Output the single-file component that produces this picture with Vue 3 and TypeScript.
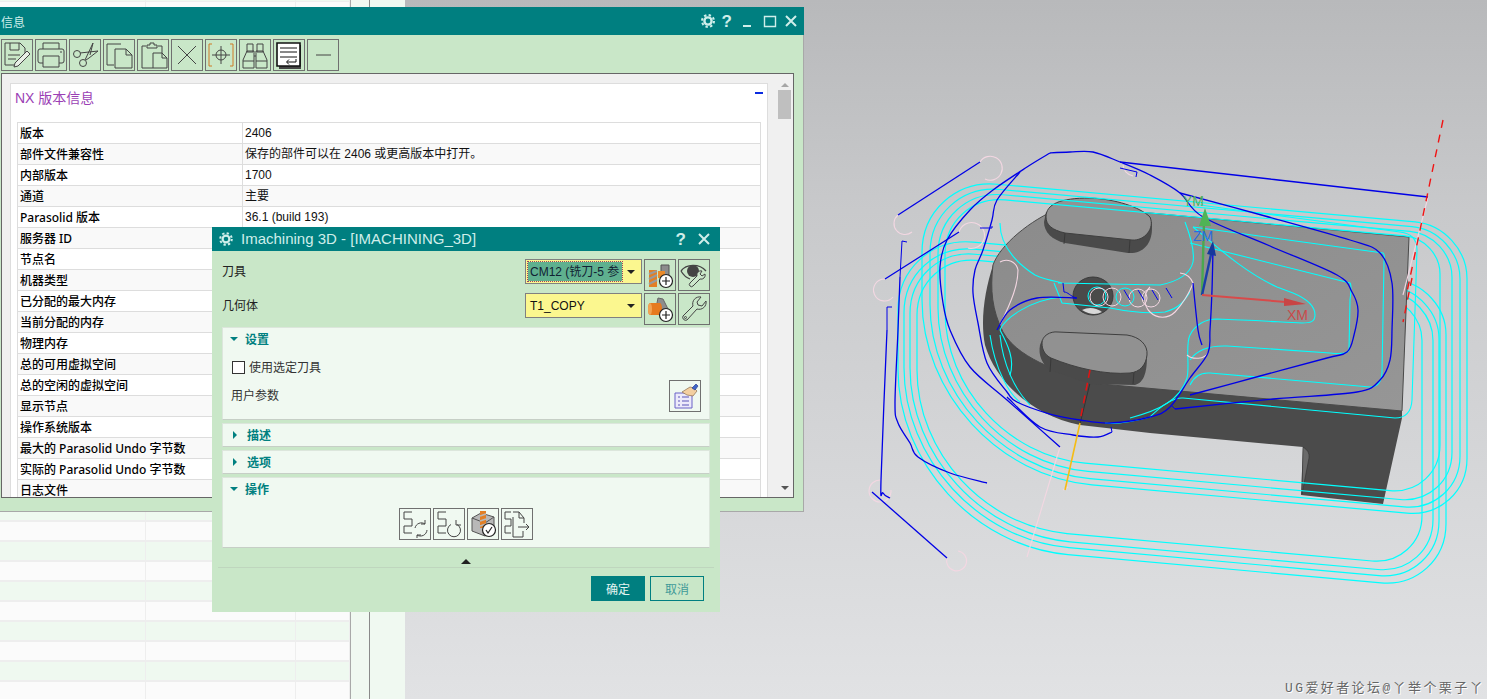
<script setup lang="ts">
type Loop = { back: number; front: number; left: number; right: number; rs: number[] }

const sheetRows = Array.from({ length: 36 }, (_, i) => i)

const infoRows: [string, string][] = [
  ['版本', '2406'],
  ['部件文件兼容性', '保存的部件可以在 2406 或更高版本中打开。'],
  ['内部版本', '1700'],
  ['通道', '主要'],
  ['Parasolid 版本', '36.1 (build 193)'],
  ['服务器 ID', ''],
  ['节点名', ''],
  ['机器类型', ''],
  ['已分配的最大内存', ''],
  ['当前分配的内存', ''],
  ['物理内存', ''],
  ['总的可用虚拟空间', ''],
  ['总的空闲的虚拟空间', ''],
  ['显示节点', ''],
  ['操作系统版本', ''],
  ['最大的 Parasolid Undo 字节数', ''],
  ['实际的 Parasolid Undo 字节数', ''],
  ['日志文件', ''],
]

// toolpath loop: rounded quad, back/front are y at x=1150, lines fall 0.09 per px
const SLOPE = 0.09
function loopPath(l: Loop): string {
  const by = (x: number) => l.back + (x - 1150) * SLOPE
  const fy = (x: number) => l.front + (x - 1150) * SLOPE
  const [bl, br, fr, fl] = l.rs
  const k = 0.45
  const p = [
    `M${l.left + bl} ${by(l.left + bl)}`,
    `L${l.right - br} ${by(l.right - br)}`,
    `C${l.right - br * k} ${by(l.right - br * k)} ${l.right} ${by(l.right) + br * k} ${l.right} ${by(l.right) + br}`,
    `L${l.right} ${fy(l.right) - fr}`,
    `C${l.right} ${fy(l.right) - fr * k} ${l.right - fr * k} ${fy(l.right - fr * k)} ${l.right - fr} ${fy(l.right - fr)}`,
    `L${l.left + fl} ${fy(l.left + fl)}`,
    `C${l.left + fl * k} ${fy(l.left + fl * k)} ${l.left} ${fy(l.left) - fl * k} ${l.left} ${fy(l.left) - fl}`,
    `L${l.left} ${by(l.left) + bl}`,
    `C${l.left} ${by(l.left) + bl * k} ${l.left + bl * k} ${by(l.left + bl * k)} ${l.left + bl} ${by(l.left + bl)}`,
    'Z',
  ]
  return p.join(' ')
}

// catmull-rom through "x y x y ..." points
function smooth(src: string): string {
  const n = src.trim().split(/\s+/).map(Number)
  const pts: number[][] = []
  for (let i = 0; i < n.length; i += 2) pts.push([n[i], n[i + 1]])
  let d = `M${pts[0][0]} ${pts[0][1]}`
  for (let i = 0; i < pts.length - 1; i++) {
    const a = pts[Math.max(i - 1, 0)]
    const b = pts[i]
    const c = pts[i + 1]
    const e = pts[Math.min(i + 2, pts.length - 1)]
    const c1 = [b[0] + (c[0] - a[0]) / 6, b[1] + (c[1] - a[1]) / 6]
    const c2 = [c[0] - (e[0] - b[0]) / 6, c[1] - (e[1] - b[1]) / 6]
    d += ` C${c1[0].toFixed(1)} ${c1[1].toFixed(1)} ${c2[0].toFixed(1)} ${c2[1].toFixed(1)} ${c[0]} ${c[1]}`
  }
  return d
}

const lowerLoops: Loop[] = [
  { back: 276, front: 541, left: 917, right: 1422, rs: [60, 40, 50, 150] },
  { back: 270, front: 549, left: 910, right: 1433, rs: [65, 45, 55, 160] },
  { back: 265, front: 555, left: 904, right: 1439, rs: [70, 48, 60, 165] },
  { back: 258, front: 562, left: 898, right: 1446, rs: [75, 50, 65, 170] },
].map(loopPath)

const upperLoops: Loop[] = [
  { back: 213, front: 469, left: 945, right: 1440, rs: [60, 35, 50, 140] },
  { back: 208, front: 477, left: 938, right: 1452, rs: [65, 42, 52, 150] },
  { back: 203, front: 484, left: 930, right: 1460, rs: [70, 48, 56, 160] },
  { back: 198, front: 490, left: 922, right: 1467, rs: [75, 52, 60, 170] },
].map(loopPath)

const cyanPaths = [
  'M1193 227L1383 253Q1385 254 1384 262L1382 373Q1381 387 1370 387L1210 373Q1196 372 1190 385',
  'M1190 243L1350 283Q1352 285 1350 300L1349 350Q1347 355 1330 353L1227 346Q1200 345 1190 360',
  'M1200 205L1400 232Q1417 234 1417 250L1412 400Q1411 418 1395 418L1183 398Q1170 397 1150 417Q1120 425 1105 423',
  'M1193 227C1210 240 1240 270 1277 287L1293 293C1305 298 1315 305 1315 315C1315 322 1310 323 1302 323C1280 322 1250 320 1217 319C1205 319 1195 325 1190 335C1185 345 1190 365 1187 378C1180 400 1160 410 1130 418',
  'M1000 223C1000 245 1015 262 1035 275C1050 282 1070 283 1058 283L1160 285C1175 282 1190 275 1193 262C1195 250 1190 235 1185 222',
  'M1054 283L1062 303L1110 308C1130 312 1150 314 1165 312C1180 308 1185 300 1190 292',
  'M1000 330C1005 318 1030 300 1062 297',
  'M990 335C995 370 1010 395 1020 402',
  'M1000 335C1003 365 1015 390 1030 405',
  'M1000 330C1008 345 1015 360 1010 375',
]

const bluePaths = [
  '1120 162 1428 197',
  '1050 153 1070 152 1093 152 1120 162 1150 175 1180 193 1203 217 1270 246 1337 275 1352 292 1358 310 1354 335 1347 352 1327 358 1260 376 1190 395',
  '1180 193 1265 216 1350 240 1380 253 1392 283 1392 330 1390 360 1380 380 1357 392 1273 399 1175 409',
  '1050 153 1027 167 993 190 970 210 947 240 940 267 943 303 950 330 970 367 1007 400 1060 447',
  '1020 172 997 200 992 220 983 250 975 270 973 293 978 323 987 363 1007 392 1017 402 1050 414 1080 420 1110 423 1150 417 1170 407 1190 378 1208 353 1210 330 1212 290 1213 250',
  '997 330 1010 310 1037 298 1077 298',
  '1193 283 1198 330 1202 345',
  '900 277 898 330 895 403 898 423 910 443 918 457 950 473 987 483',
  '887 330 881 480 883 493 890 498',
  '898 215 980 162',
  '885 279 959 232',
  '872 492 947 558',
  '1007 397 1040 427 1073 435 1098 437 1112 432',
].map(smooth)

const blueTicks = [
  'M892 307L887 307L887 330',
  'M900 277L902 241L907 242',
  'M980 228L992 228L992 226',
  'M1076 298C1070 296 1068 292 1064 292L1063 283',
  'M1120 168L1137 172L1136 177',
  'M1112 432L1111 427',
  'M1175 409L1172 406',
]

const pinkPaths = [
  'M980 162A12 12 0 1 1 985 179',
  'M898 215A11 11 0 1 0 912 232',
  'M959 232A13 13 0 1 1 968 248',
  'M885 279A11 11 0 1 0 893 297',
  'M881 480A11 11 0 1 0 891 490',
  'M947 558A10 10 0 1 0 958 551',
  'M1123 165A12 12 0 0 0 1133 176',
  'M1000 262A12 12 0 0 1 1018 270C1018 285 1012 300 1000 325',
  'M1060 447L1027 557',
  'M1428 197L1403 295',
  'M1063 490L1068 487',
  'M1150 287A14 14 0 0 0 1175 312C1182 305 1190 292 1193 283A16 16 0 0 0 1180 273',
  'M1187 355A12 8 0 0 0 1208 353',
]

const helix = [
  { cx: 1097, cy: 296, c: '#00ffff' },
  { cx: 1099, cy: 297, c: '#f3d7e2' },
  { cx: 1112, cy: 297, c: '#f3d7e2' },
  { cx: 1125, cy: 297, c: '#00ffff' },
  { cx: 1138, cy: 298, c: '#f3d7e2' },
  { cx: 1151, cy: 298, c: '#f3d7e2' },
]
</script>

<template>
  <div class="page">
    <!-- spreadsheet behind the windows -->
    <div class="sheet">
      <div class="sheet-grid">
        <div v-for="r in sheetRows" :key="r" class="sheet-row">
          <span class="cell c1" />
          <span class="cell c2" />
          <span class="cell c3">{{ r === 1 ? '数量 kW' : '' }}</span>
        </div>
      </div>
      <div class="side-a" />
      <div class="side-b" />
    </div>

    <!-- 3D view -->
    <div class="viewport">
      <svg class="scene" width="1082" height="699" viewBox="405 0 1082 699" fill="none">
        <defs>
          <linearGradient id="faceGrad" x1="0" y1="0" x2="1" y2="1">
            <stop offset="0" stop-color="#8b8b8b" />
            <stop offset="1" stop-color="#969696" />
          </linearGradient>
        </defs>

        <g stroke="#00ffff" stroke-width="1.2">
          <path v-for="(d, i) in lowerLoops" :key="i" :d="d" />
        </g>

        <!-- part -->
        <path d="M993 265C985 290 980 320 985 345C995 380 1030 415 1080 425L1150 433L1303 447L1301 495L1383 504L1402 418L1402 411L1090 300Z" fill="#4b4b4b" />
        <path d="M1303 447Q1310 451 1309 458L1302 494Z" fill="#6a6a6a" stroke="#333" stroke-width="0.6" />
        <path d="M1409 237L1150 213L1060 208C1030 220 1000 245 993 265C990 290 992 310 1003 332C1012 348 1030 358 1045 365L1090 383L1402 411Z" fill="url(#faceGrad)" stroke="#4a4a4a" stroke-width="1" />
        <path d="M1090 383L1080 424" stroke="#333" stroke-width="1" />

        <!-- upper boss -->
        <path d="M1044 222C1044 232 1052 240 1065 243L1128 253C1142 254 1152 245 1152 228L1152 222L1046 212Z" fill="#4a4a4a" />
        <path d="M1065 233L1064 244M1130 240L1129 253" stroke="#333" stroke-width="0.8" />
        <path d="M1046 217C1046 204 1060 198 1090 198C1115 199 1140 207 1150 217C1155 228 1145 241 1132 240L1065 233C1052 230 1046 225 1046 217Z" fill="#929292" stroke="#3f3f3f" stroke-width="1" />

        <!-- lower boss -->
        <path d="M1040 345C1038 355 1042 364 1050 370L1090 384L1135 385C1145 382 1147 370 1147 355L1042 340Z" fill="#4a4a4a" />
        <path d="M1051 358L1050 372M1134 372L1133 384" stroke="#333" stroke-width="0.8" />
        <path d="M1042 343C1042 336 1050 331 1058 332L1127 335C1140 337 1148 345 1147 355C1146 365 1140 372 1130 373C1105 375 1075 368 1051 358C1045 355 1042 350 1042 343Z" fill="#919191" stroke="#3f3f3f" stroke-width="1" />

        <!-- hole -->
        <ellipse cx="1093" cy="296" rx="20" ry="19" fill="#4a4a4a" stroke="#3a3a3a" />
        <path d="M1082 310Q1092 305 1102 312Q1093 317 1082 310Z" fill="#d8d8d8" />

        <g stroke="#00ffff" stroke-width="1.2">
          <path v-for="(d, i) in upperLoops" :key="i" :d="d" />
        </g>
        <g stroke="#00ffff" stroke-width="1.1">
          <path v-for="(d, i) in cyanPaths" :key="i" :d="d" />
        </g>

        <circle v-for="(h, i) in helix" :key="i" :cx="h.cx" :cy="h.cy" r="9" :stroke="h.c" stroke-width="1" />
        <path d="M1124 290L1130 300M1138 290L1144 300M1152 290L1158 300M1166 288L1172 298" stroke="#0000ee" stroke-width="1" />

        <g stroke="#f3d7e2" stroke-width="1.1">
          <path v-for="(d, i) in pinkPaths" :key="i" :d="d" />
        </g>
        <g stroke="#0000e6" stroke-width="1.3">
          <path v-for="(d, i) in bluePaths" :key="i" :d="d" />
          <path v-for="(d, i) in blueTicks" :key="'t' + i" :d="d" stroke-width="1" />
        </g>

        <!-- tool axis -->
        <path d="M1443 120L1407 292" stroke="#f01414" stroke-width="1.4" stroke-dasharray="8 7" />
        <path d="M1412 278L1403 322" stroke="#f01414" stroke-width="1.4" stroke-dasharray="8 6" />
        <path d="M1090 370L1080 421" stroke="#e01414" stroke-width="1.6" stroke-dasharray="8 5" />
        <path d="M1080 423L1065 490" stroke="#f5bc14" stroke-width="1.6" />

        <!-- MCS -->
        <path d="M1202 295L1204 222" stroke="#4aa84f" stroke-width="2.4" />
        <path d="M1205 208L1199 226L1211 226Z" fill="#4fb355" />
        <path d="M1202 295L1212 250" stroke="#1a3fa8" stroke-width="2.4" />
        <path d="M1213 241L1207 254L1216 256Z" fill="#15389c" />
        <path d="M1202 295L1286 302" stroke="#d84a4a" stroke-width="2" />
        <path d="M1306 304L1284 298L1284 306Z" fill="#c84545" />
        <text x="1183" y="206" class="axis" fill="#4fae5a">YM</text>
        <text x="1193" y="241" class="axis" fill="#2a6ae0">ZM</text>
        <text x="1287" y="320" class="axis" fill="#c94a4a">XM</text>
      </svg>
      <div class="mark">UG爱好者论坛@丫举个栗子丫</div>
    </div>

    <!-- information window -->
    <section class="info">
      <header class="bar">
        <span class="info-title">信息</span>
        <span class="bar-icons">
          <svg class="gear" width="16" height="16" viewBox="0 0 16 16" fill="none" stroke="#cfeeea">
            <circle cx="8" cy="8" r="3.6" stroke-width="2.4" />
            <circle cx="8" cy="8" r="6" stroke-width="2" stroke-dasharray="2.4 2.3" />
          </svg>
          <span class="q">?</span>
          <svg width="14" height="14" viewBox="0 0 14 14" fill="none" stroke="#cfeeea" stroke-width="2"><path d="M1 12h8" /></svg>
          <svg width="14" height="14" viewBox="0 0 14 14" fill="none" stroke="#cfeeea" stroke-width="1.4"><path d="M1.5 2.5h11v10h-11z" /></svg>
          <svg width="14" height="14" viewBox="0 0 14 14" fill="none" stroke="#cfeeea" stroke-width="2"><path d="M2 2l10 10M12 2L2 12" /></svg>
        </span>
      </header>
      <div class="toolbar">
        <button class="ib">
          <svg viewBox="0 0 30 30">
            <path d="M3 3h15l5 5v5M3 3v22h9M8 3v7h9V3M6 15h12M6 19h8" />
            <path d="M25 11l3 3-12 12-4 1 1-4z" fill="#e8efe6" />
          </svg>
        </button>
        <button class="ib">
          <svg viewBox="0 0 30 30">
            <path d="M7 9V3h16v6M7 23H4a2 2 0 0 1-2-2V11a2 2 0 0 1 2-2h22a2 2 0 0 1 2 2v10a2 2 0 0 1-2 2h-3M7 16h16v11H7zM24 12h2" />
          </svg>
        </button>
        <button class="ib">
          <svg viewBox="0 0 30 30">
            <circle cx="7" cy="14" r="3.5" />
            <circle cx="13" cy="23" r="3.5" />
            <path d="M10 13l18-2-9 7-3 2M15 20L23 3l-3 12" />
          </svg>
        </button>
        <button class="ib">
          <svg viewBox="0 0 30 30">
            <path d="M17 4H3v21h7" />
            <path d="M11 9h11l6 6v13H11zM22 9v6h6" />
          </svg>
        </button>
        <button class="ib">
          <svg viewBox="0 0 30 30">
            <path d="M8 6H4v22h11M20 6h4v7" />
            <path d="M9 7V5h3V3h4v2h3v3H9zM15 13h9l5 5v10H15zM24 13v5h5" />
          </svg>
        </button>
        <button class="ib">
          <svg viewBox="0 0 30 30"><path d="M6 6l18 18M24 6L6 24" /></svg>
        </button>
        <button class="ib">
          <svg viewBox="0 0 30 30">
            <path d="M6 4H3v22h3M24 4h3v22h-3" stroke="#cf7a24" />
            <circle cx="15" cy="15" r="5" />
            <path d="M15 6v18M6 15h18" />
          </svg>
        </button>
        <button class="ib">
          <svg viewBox="0 0 30 30">
            <path d="M7 4h6v8H7zM17 4h6v8h-6zM7 11h7v17H3v-8zM16 11h7l4 9v8H16zM14 16h2M3 21h11M16 21h11" />
          </svg>
        </button>
        <button class="ib">
          <svg viewBox="0 0 30 30">
            <path d="M5 5h22v24H5z" fill="#444" stroke="none" />
            <path d="M3 3h23v23H3z" fill="#fff" stroke="#111" stroke-width="1.6" />
            <path d="M6 8h17M6 12h17M6 17h17M22 19v3h-9M15 19.5L12.5 22l2.5 2.5" stroke="#111" />
          </svg>
        </button>
        <button class="ib">
          <svg viewBox="0 0 30 30"><path d="M8 15h15" /></svg>
        </button>
      </div>

      <div class="box">
        <div class="panel">
          <div class="panel-head">
            <h2>NX 版本信息</h2>
            <i class="collapse" />
          </div>
          <div class="info-table">
            <div v-for="(row, i) in infoRows" :key="i" class="info-row">
              <span class="k">{{ row[0] }}</span>
              <span class="v">{{ row[1] }}</span>
            </div>
          </div>
        </div>
        <div class="scroll">
          <i class="arr up" />
          <i class="thumb" />
          <i class="arr down" />
        </div>
      </div>
    </section>

    <!-- operation dialog -->
    <section class="dialog">
      <header class="dlg-bar">
        <svg width="16" height="16" viewBox="0 0 16 16" fill="none" stroke="#cfeeea">
          <circle cx="8" cy="8" r="3.4" stroke-width="2.2" />
          <circle cx="8" cy="8" r="5.8" stroke-width="2" stroke-dasharray="2.3 2.25" />
        </svg>
        <span class="dlg-title">Imachining 3D - [IMACHINING_3D]</span>
        <span class="q dlg-q">?</span>
        <svg width="14" height="14" viewBox="0 0 14 14" fill="none" stroke="#cfeeea" stroke-width="2"><path d="M2 2l10 10M12 2L2 12" /></svg>
      </header>

      <div class="dlg-body">
        <div class="pick">
          <label>刀具</label>
          <div class="combo">
            <span class="sel">CM12 (铣刀-5 参</span>
            <i class="tri" />
          </div>
          <button class="ib">
            <svg viewBox="0 0 30 30">
              <path d="M16 5h8v14h-8z" fill="#8c8c8c" stroke="#555" />
              <path d="M4 10h8v17H4z" fill="#e27f25" stroke="none" />
              <path d="M4 14l8-3M4 19l8-4M4 24l8-4" stroke="#9a9a9a" stroke-width="2" />
              <path d="M13 11h7v7h-7z" fill="#ea8a2a" stroke="none" />
              <circle cx="21" cy="21" r="6.5" fill="#fff" stroke="#222" stroke-width="1.2" />
              <path d="M21 17v8M17 21h8" stroke="#222" stroke-width="1.2" />
            </svg>
          </button>
          <button class="ib">
            <svg viewBox="0 0 30 30">
              <path d="M2 11C7 4 20 3 27 11" stroke-width="1.3" />
              <path d="M2 11C5 16 8 18 11 19" stroke-width="1.3" />
              <circle cx="14" cy="11" r="6" fill="#444" stroke="none" />
              <path d="M26 14a4 4 0 0 1-5 5l-7 7a2 2 0 0 1-3-3l7-7a4 4 0 0 1 5-5l-2 3 2 2z" fill="#cde8cc" stroke="#444" />
            </svg>
          </button>
        </div>
        <div class="pick">
          <label>几何体</label>
          <div class="combo">
            <span class="plain">T1_COPY</span>
            <i class="tri" />
          </div>
          <button class="ib">
            <svg viewBox="0 0 30 30">
              <path d="M13 4l5 1 7 14-7 3-6-13z" fill="#8d8d8d" stroke="#666" />
              <path d="M5 9h10a2 6 0 0 1 0 12H5a2 6 0 0 1 0-12z" fill="#e67a1f" stroke="none" />
              <ellipse cx="5" cy="15" rx="2" ry="6" fill="#f2a354" stroke="none" />
              <circle cx="21" cy="21" r="6.5" fill="#fff" stroke="#222" stroke-width="1.2" />
              <path d="M21 17v8M17 21h8" stroke="#222" stroke-width="1.2" />
            </svg>
          </button>
          <button class="ib">
            <svg viewBox="0 0 30 30">
              <path d="M27 7a7 7 0 0 1-9 8L8 26a3 3 0 0 1-4-4l10-10a7 7 0 0 1 8-9l-4 5 1 3 4 1z" />
              <circle cx="6.5" cy="23.5" r="1" />
            </svg>
          </button>
        </div>

        <div class="sec sec-set">
          <div class="sec-head"><i class="open" /><span>设置</span></div>
          <div class="check-row"><i class="check" /><span>使用选定刀具</span></div>
          <div class="param-row">
            <span>用户参数</span>
            <button class="ib">
              <svg viewBox="0 0 30 30">
                <path d="M5 12h17v15H5z" fill="#eceafa" stroke="#6a62c8" />
                <path d="M8 16h2M12 16h7M8 20h2M12 20h7M8 24h2M12 24h7" stroke="#5a54b8" />
                <path d="M12 11l8-5 4 1 3 3-4 5-6-1z" fill="#f3cfa0" stroke="#8a6a4a" stroke-width="0.7" />
                <path d="M22 7l4-4 2 2-3 4z" fill="#3f66c8" stroke="#2a3f90" stroke-width="0.7" />
              </svg>
            </button>
          </div>
        </div>
        <div class="sec sec-fold"><div class="sec-head"><i class="shut" /><span>描述</span></div></div>
        <div class="sec sec-fold"><div class="sec-head"><i class="shut" /><span>选项</span></div></div>
        <div class="sec sec-act">
          <div class="sec-head"><i class="open" /><span>操作</span></div>
          <div class="act-row">
            <button class="ib">
              <svg viewBox="0 0 30 30">
                <path d="M12 3H4v7h8v7H4v7h8" />
                <path d="M15 19a6.5 6.5 0 0 1 10-4M27 21a6.5 6.5 0 0 1-10 5M25 11v4h-4M17 29v-3h4" />
              </svg>
            </button>
            <button class="ib">
              <svg viewBox="0 0 30 30">
                <path d="M12 3H4v7h8v7H4v7h8" />
                <path d="M23 15.5a6.5 6.5 0 1 1-6 0M22 11v5h5" />
              </svg>
            </button>
            <button class="ib">
              <svg viewBox="0 0 30 30">
                <path d="M4 9l9-5 13 4v14l-9 5-13-5z" fill="#b8b8b8" stroke="#555" />
                <path d="M4 9l13 5v13M17 14l9-6" stroke="#555" />
                <path d="M12 2h6v17h-6z" fill="#e27f25" stroke="none" />
                <path d="M12 7l6-2M12 12l6-2M12 17l6-2" stroke="#b8b8b8" stroke-width="1.6" />
                <circle cx="21" cy="21" r="6.5" fill="#fff" stroke="#222" stroke-width="1.2" />
                <path d="M18 21l2 3 4-6" stroke="#222" stroke-width="1.2" />
              </svg>
            </button>
            <button class="ib">
              <svg viewBox="0 0 30 30">
                <path d="M9 3H3v7h6v7H3v7h6" />
                <path d="M11 3h6l5 6v5M17 3v6h5M11 8v20h10v-6M16 18h11M24 15l3 3-3 3" />
              </svg>
            </button>
          </div>
        </div>
        <div class="more"><i /></div>
      </div>

      <footer class="dlg-foot">
        <button class="ok">确定</button>
        <button class="cancel">取消</button>
      </footer>
    </section>
  </div>
</template>

<style scoped>
.page {
  position: relative;
  display: flex;
  width: 1487px;
  height: 699px;
  overflow: hidden;
  font-family: "Liberation Sans", "Noto Sans CJK SC", sans-serif;
  font-size: 12px;
  color: #111;
}

/* sheet */
.sheet {
  display: flex;
  flex: 0 0 405px;
  height: 699px;
  overflow: hidden;
  background: #f0f9f1;
}
.sheet-grid {
  flex: 0 0 350px;
}
.sheet-row {
  display: flex;
  height: 18px;
  border-bottom: 2px solid #eeeeee;
}
.sheet-row:first-child {
  height: 1px;
  border-bottom-width: 1px;
}
.sheet-row:nth-child(odd) {
  background: #eff9f0;
}
.sheet-row:nth-child(even) {
  background: #fbfbfb;
}
.cell {
  display: block;
  border-right: 1px solid #eeeeee;
  overflow: hidden;
}
.c1 { width: 145px; }
.c2 { width: 149px; }
.c3 {
  width: 54px;
  padding: 3px 0 0 5px;
  box-sizing: border-box;
  font-size: 11px;
  white-space: nowrap;
}
.side-a {
  flex: 0 0 18px;
  border-left: 1px solid #a9a9a9;
  border-right: 1px solid #8a8a8a;
}
.side-b {
  flex: 1;
}

/* viewport */
.viewport {
  position: relative;
  flex: 1;
  height: 699px;
  background: linear-gradient(180deg, #b8b9bb 0%, #c8c9cb 30%, #e1e2e4 100%);
}
.scene {
  display: block;
}
.axis {
  font: 14px "Liberation Sans", sans-serif;
}
.mark {
  position: absolute;
  right: 2px;
  bottom: 3px;
  font-family: "Liberation Mono", "Noto Sans CJK SC", monospace;
  font-size: 13px;
  letter-spacing: 2.4px;
  color: #666;
  text-shadow: 1px 1px 0 #fff;
  white-space: nowrap;
}

/* shared */
.ib {
  display: block;
  flex: none;
  width: 32px;
  height: 32px;
  padding: 0;
  box-sizing: border-box;
  background: transparent;
  border: 1px solid #707070;
}
.ib svg {
  display: block;
  width: 30px;
  height: 30px;
  fill: none;
  stroke: #444;
  stroke-width: 1;
}
.q {
  font: bold 17px "Liberation Sans", sans-serif;
  color: #cfeeea;
  line-height: 1;
}

/* info window */
.info {
  position: absolute;
  left: 0;
  top: 7px;
  width: 804px;
  height: 505px;
  display: flex;
  flex-direction: column;
  box-sizing: border-box;
  background: #c9e7c8;
  border-right: 1px solid #a8a8a8;
  border-bottom: 1px solid #a8a8a8;
}
.bar {
  display: flex;
  align-items: center;
  justify-content: space-between;
  flex: 0 0 28px;
  margin-right: -1px;
  padding-right: 6px;
  background: #007f80;
}
.info-title {
  padding-left: 1px;
  font-size: 12px;
  color: #cfeeea;
}
.bar-icons {
  display: flex;
  align-items: center;
  gap: 7px;
}
.gear {
  margin-right: -1px;
}
.bar-icons .q {
  margin-right: 3px;
}
.toolbar {
  display: flex;
  gap: 2px;
  flex: 0 0 38px;
  padding: 4px 0 2px 1px;
  box-sizing: border-box;
}
.box {
  display: flex;
  height: 425px;
  margin: 0 9px 0 1px;
  padding-top: 9px;
  box-sizing: border-box;
  overflow: hidden;
  background: #f0f0f0;
  border: 1px solid #666;
}
.panel {
  flex: 0 0 758px;
  margin-left: 8px;
  box-sizing: border-box;
  background: #fff;
  border: 1px solid #dddddd;
  border-bottom: 0;
}
.panel-head {
  display: flex;
  align-items: flex-start;
  justify-content: space-between;
  height: 38px;
  padding: 4px 4px 0 4px;
  box-sizing: border-box;
}
.panel-head h2 {
  margin: 0;
  font-size: 14px;
  font-weight: 400;
  line-height: 20px;
  color: #9b3fb5;
}
.collapse {
  display: block;
  width: 8px;
  height: 2px;
  margin-top: 4px;
  background: #0a2be0;
}
.info-table {
  margin: 0 6px;
  border: 1px solid #dddddd;
  border-bottom: 0;
}
.info-row {
  display: flex;
  height: 21px;
  box-sizing: border-box;
  border-bottom: 1px solid #dddddd;
  line-height: 21px;
}
.info-row:nth-child(even) {
  background: #f9f9f9;
}
.k {
  flex: 0 0 225px;
  padding-left: 2px;
  box-sizing: border-box;
  border-right: 1px solid #dddddd;
  font-family: "Noto Sans", "Noto Sans CJK SC", sans-serif;
  font-weight: 500;
  color: #000;
}
.v {
  padding-left: 2px;
}
.scroll {
  position: relative;
  flex: 0 0 13px;
  margin-left: 10px;
}
.scroll .thumb {
  position: absolute;
  left: 0;
  top: 7px;
  width: 13px;
  height: 29px;
  background: #bfbfbf;
}
.arr {
  position: absolute;
  left: 3px;
  border-left: 4px solid transparent;
  border-right: 4px solid transparent;
}
.arr.up {
  top: 0;
  border-bottom: 4px solid #a6a6a6;
}
.arr.down {
  top: 403px;
  border-top: 4px solid #555;
}

/* dialog */
.dialog {
  position: absolute;
  left: 212px;
  top: 227px;
  width: 508px;
  height: 385px;
  display: flex;
  flex-direction: column;
  background: #c9e7c8;
}
.dlg-bar {
  display: flex;
  align-items: center;
  flex: 0 0 24px;
  padding: 0 9px 0 6px;
  background: #007f80;
}
.dlg-title {
  flex: 1;
  padding-left: 7px;
  margin-top: -2px;
  font-size: 15px;
  color: #cfeeea;
}
.dlg-q {
  margin-right: 11px;
}
.dlg-body {
  display: flex;
  flex-direction: column;
  padding: 8px 10px 0;
}
.pick {
  display: flex;
  align-items: flex-start;
  gap: 2px;
  height: 34px;
}
.pick label {
  flex: 1;
  line-height: 27px;
  color: #222;
}
.combo {
  display: flex;
  align-items: center;
  width: 117px;
  height: 25px;
  padding: 0 6px 0 2px;
  box-sizing: border-box;
  background: #fbf78f;
  border: 1px solid #808080;
}
.sel,
.plain {
  flex: 1;
  padding-left: 2px;
  height: 19px;
  line-height: 20px;
  font-size: 12px;
  white-space: nowrap;
  overflow: hidden;
}
.sel {
  background: #5fb08f;
  outline: 1px dotted #a04060;
  color: #123;
}
.tri {
  width: 0;
  height: 0;
  margin-left: 5px;
  border-left: 4px solid transparent;
  border-right: 4px solid transparent;
  border-top: 4px solid #222;
}
.sec {
  margin-bottom: 3px;
  box-sizing: border-box;
  background: #f0f9f1;
  border: 1px solid #dce6dc;
  border-bottom-color: #c6cfc6;
}
.sec-head {
  display: flex;
  align-items: center;
  gap: 6px;
  height: 21px;
  padding-left: 7px;
  font-weight: 700;
  color: #008080;
}
.open {
  width: 0;
  height: 0;
  margin: 0 1px 0 0;
  border-left: 4px solid transparent;
  border-right: 4px solid transparent;
  border-top: 4px solid #008080;
}
.shut {
  width: 0;
  height: 0;
  margin: 0 4px 0 3px;
  border-top: 4px solid transparent;
  border-bottom: 4px solid transparent;
  border-left: 4px solid #008080;
}
.sec-set { height: 93px; }
.sec-fold { height: 24px; }
.sec-act { height: 71px; }
.check-row {
  display: flex;
  align-items: center;
  gap: 4px;
  height: 13px;
  margin-top: 12px;
  padding-left: 9px;
  color: #333;
}
.check-row span {
  margin-top: -2px;
}
.check {
  display: block;
  width: 13px;
  height: 13px;
  box-sizing: border-box;
  background: #fff;
  border: 1px solid #333;
}
.param-row {
  display: flex;
  justify-content: space-between;
  align-items: center;
  margin-top: 6px;
  padding: 0 8px;
  color: #333;
}
.param-row span {
  margin-top: -4px;
}
.act-row {
  display: flex;
  justify-content: center;
  gap: 2px;
  margin-top: 9px;
}
.more {
  display: flex;
  justify-content: center;
  margin: 8px -4px 0;
  padding-bottom: 3px;
  border-bottom: 1px solid #bfd6be;
}
.more i {
  border-left: 5px solid transparent;
  border-right: 5px solid transparent;
  border-bottom: 5px solid #222;
}
.dlg-foot {
  display: flex;
  justify-content: flex-end;
  gap: 5px;
  padding: 8px 16px 0 0;
}
.dlg-foot button {
  width: 54px;
  height: 25px;
  padding: 0;
  font: 12px "Liberation Sans", "Noto Sans CJK SC", sans-serif;
  border: 1px solid #007f80;
}
.ok {
  background: #007f80;
  color: #e4f5f2;
}
.cancel {
  background: transparent;
  color: #3f9a98;
}
</style>

<style>
html,
body {
  margin: 0;
  padding: 0;
  overflow: hidden;
}
</style>
